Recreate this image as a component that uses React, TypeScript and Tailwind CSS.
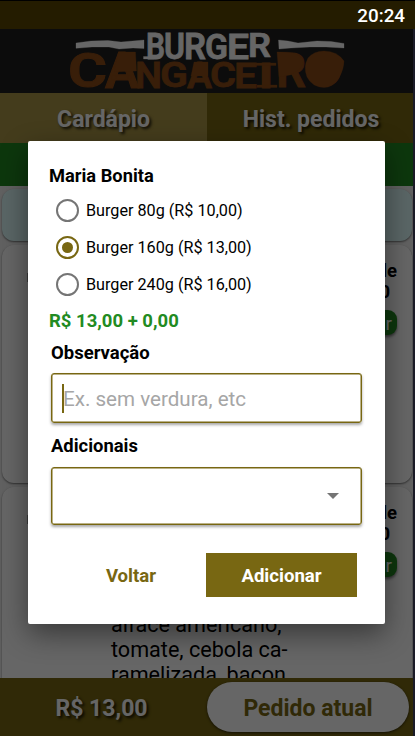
import { useState } from "react";

interface Option {
  id: number;
  label: string;
}

interface LogoLetter {
  char: string;
  x: number;
  width: number;
  base: number;
  height: number;
}

const options: Option[] = [
  { id: 1, label: "Burger 80g (R$ 10,00)" },
  { id: 2, label: "Burger 160g (R$ 13,00)" },
  { id: 3, label: "Burger 240g (R$ 16,00)" },
];

const burger: LogoLetter[] = [
  { char: "B", x: 146, width: 19, base: 59, height: 26 },
  { char: "U", x: 164, width: 21, base: 59, height: 26 },
  { char: "R", x: 184, width: 22, base: 59, height: 26 },
  { char: "G", x: 205, width: 23, base: 58.5, height: 25 },
  { char: "E", x: 227, width: 22, base: 58.5, height: 25 },
  { char: "R", x: 248, width: 23, base: 57, height: 24 },
];

const cangaceiro: LogoLetter[] = [
  { char: "C", x: 68, width: 39, base: 87, height: 34 },
  { char: "A", x: 105, width: 34, base: 87.5, height: 35 },
  { char: "N", x: 135, width: 27, base: 87.5, height: 26 },
  { char: "G", x: 160, width: 28, base: 87, height: 25 },
  { char: "A", x: 187, width: 25, base: 87.5, height: 26 },
  { char: "C", x: 210, width: 26, base: 87, height: 25 },
  { char: "E", x: 234, width: 23, base: 87.5, height: 25 },
  { char: "I", x: 258, width: 16, base: 87.5, height: 25 },
  { char: "R", x: 276, width: 30, base: 87, height: 34 },
  { char: "O", x: 307, width: 35, base: 86, height: 32 },
];

function LogoWord({ letters }: { letters: LogoLetter[] }) {
  return (
    <>
      {letters.map((l, index) => (
        <text
          key={index}
          transform={`translate(${l.x} ${l.base}) scale(1 ${l.height / 10})`}
          fontSize="14.06"
          textLength={l.width}
          lengthAdjust="spacingAndGlyphs"
        >
          {l.char}
        </text>
      ))}
    </>
  );
}

function Logo() {
  return (
    <svg
      width="280"
      height="64"
      viewBox="66 29 280 64"
      className="overflow-visible font-['Roboto',sans-serif] font-semibold"
    >
      <g fill="#ffffff" stroke="#ffffff" strokeWidth="0.3">
        <path d="M76 43 L91 41 L108 40.5 L121 42 L144 40 V48.5 L133 48 L119 49 L109 47 L92 47 L76 48.3Z" />
        <path d="M278.5 40 L288 41 L298 43 L317 41 L331 41.5 L344 43.5 V48 L326 47 L310 47 L291 48 L279 49Z" />
        <path d="M143.500 56.500 H154 V59 H143.500Z" />
        <LogoWord letters={burger} />
      </g>
      <g fill="#8d4b17" stroke="#8d4b17" strokeWidth="0.3">
        <LogoWord letters={cangaceiro} />
        {/* solid heads of the wood-cut lettering */}
        <path d="M118.500 52 H135.500 L136.500 71 L114 72Z" />
        <path d="M194 62 H208 V76 H191Z" />
        <path d="M256 63 H276 V65.500 H256Z" />
        <path d="M257 85 H277 V87.500 H257Z" />
        <path d="M277 52 Q302 51 303 62 Q302 70 290 75 L279 77Z" />
        <path d="M324 51 Q337 51 344 61 Q344 69 339 78 Q333 87.500 324 87.500 Q312 87 307 77 Q303 67 308 58 Q314 51 324 51Z" />
      </g>
    </svg>
  );
}

function MenuCard({ height, children }: { height: string; children?: string }) {
  return (
    <div
      className={`${height} shrink-0 overflow-hidden rounded-xl bg-white shadow-[0_1px_2px_rgba(0,0,0,0.5)]`}
    >
      <div className="flex h-[143px] justify-between pl-[25px] pr-[15px] pt-[15px]">
        <div className="mt-[13px] h-[9px] w-1 bg-[#999]"></div>
        <div className="w-[92px] text-center">
          <p className="ml-[-6px] w-[98px] whitespace-nowrap text-right text-[18.500px] font-bold leading-[22px]">
            A partir de
          </p>
          <p className="pr-[7px] text-right text-[18.500px] font-bold leading-[21px]">
            R$ 10,00
          </p>
          <p className="mt-[7px] h-[25px] rounded-[9px] bg-[#228b22] pr-[5px] text-right text-[19px] leading-[27px] text-white shadow-[0_2px_3px_rgba(0,0,0,0.5)]">
            Adicionar
          </p>
        </div>
      </div>
      {children && (
        <p className="ml-[109px] mt-[-18px] whitespace-pre-line text-[21.600px] leading-[25px]">
          {children}
        </p>
      )}
    </div>
  );
}

function App() {
  const [selected, setSelected] = useState<number>(2);
  const [note, setNote] = useState<string>("");

  return (
    <div className="flex h-[736px] w-[415px] flex-col overflow-hidden border-t border-black bg-[#241c00] font-['Roboto',sans-serif] text-black">
      <div className="flex h-7 shrink-0 items-center justify-end pr-[10px] pt-[2px] text-[18.800px] font-medium text-white">
        20:24
      </div>

      <div className="relative flex h-[707px] flex-col bg-[#f2f2f2]">
        <div className="flex h-16 shrink-0 justify-center bg-[#1e1e1e] pr-[3px]">
          <Logo />
        </div>
        <div className="flex h-[50px] shrink-0 text-center text-[23px] font-bold leading-[53px] text-white [text-shadow:2px_2px_3px_rgba(0,0,0,0.8)]">
          <div className="w-[207px] bg-[#aa9646]">Cardápio</div>
          <div className="flex-1 bg-[#786712]">Hist. pedidos</div>
        </div>
        <div className="h-[43px] shrink-0 bg-[#228b22]"></div>

        <div className="flex min-h-0 flex-1 flex-col gap-1 overflow-hidden py-[3px] pl-[2px] pr-[3px]">
          <div className="h-[52px] shrink-0 rounded-xl bg-[#e0ffff] shadow-[0_1px_2px_rgba(0,0,0,0.5)]"></div>
          <MenuCard height="h-[238px]" />
          <MenuCard height="h-[260px]">
            {"alface americano,\ntomate, cebola ca-\nramelizada, bacon"}
          </MenuCard>
        </div>

        <div className="flex h-[58px] shrink-0 items-center bg-[#786712] text-center text-[23px] font-bold">
          <div className="w-[203px] pt-[4px] text-white [text-shadow:2px_2px_3px_rgba(0,0,0,0.8)]">
            R$ 13,00
          </div>
          <div className="ml-1 h-[50px] w-[202px] rounded-[25px] bg-white leading-[54px] text-[#786712] shadow-[0_1px_3px_rgba(0,0,0,0.6)]">
            Pedido atual
          </div>
        </div>

        {/* modal */}
        <div className="absolute inset-0 border-r-2 border-[#1b1b27] bg-black/60">
          <div className="ml-7 mt-[112px] flex h-[483px] w-[357px] flex-col rounded-[2px] bg-white pl-[21px] pr-[23px] shadow-[0_10px_28px_rgba(0,0,0,0.45)]">
            <p className="mt-[23px] text-[18.300px] font-bold leading-6">
              Maria Bonita
            </p>
            <div className="mt-[4px] flex flex-col">
              {options.map((option) => (
                <button
                  key={option.id}
                  className="flex h-[37px] items-center pl-[7px]"
                  onClick={() => setSelected(option.id)}
                >
                  <span
                    className={`flex size-[23px] items-center justify-center rounded-full border-2 ${
                      selected === option.id
                        ? "border-[#786712]"
                        : "border-[#757575]"
                    }`}
                  >
                    {selected === option.id && (
                      <span className="size-[11px] rounded-full bg-[#786712]"></span>
                    )}
                  </span>
                  <span className="ml-[7px] pt-[2px] text-[16.200px]">
                    {option.label}
                  </span>
                </button>
              ))}
            </div>
            <p className="mt-[6px] text-[18.500px] font-bold leading-6 text-[#228b22]">
              R$ 13,00 + 0,00
            </p>
            <p className="ml-[2px] mt-[8px] text-[18.500px] font-bold leading-6">
              Observação
            </p>
            <div className="ml-[2px] mt-[8px] flex h-[50px] w-[311px] items-center rounded-[3px] border border-[#786712] pl-[10px] shadow-[inset_0_0_0_0.5px_#786712,0_2px_3px_rgba(0,0,0,0.35)]">
              <span className="h-[29px] w-[2px] shrink-0 bg-[#786712]"></span>
              <input
                className="ml-[-1px] w-[280px] pt-[2px] text-[20.600px] outline-none placeholder:text-[#a6a6a6]"
                placeholder="Ex. sem verdura, etc"
                value={note}
                onChange={(e) => setNote(e.target.value)}
              />
            </div>
            <p className="ml-[2px] mt-[11px] text-[18.400px] font-bold leading-6">
              Adicionais
            </p>
            <div className="ml-[2px] mt-[9px] flex h-[58px] w-[311px] items-center justify-end rounded-[3px] border border-[#786712] pr-[22px] shadow-[inset_0_0_0_0.5px_#786712,0_2px_3px_rgba(0,0,0,0.35)]">
              <svg width="12" height="6" viewBox="0 0 12 6">
                <path d="M0 0H12L6 6Z" fill="#757575" />
              </svg>
            </div>
            <div className="mt-[28px] flex h-[44px] text-center text-[18.600px] font-bold leading-[46px]">
              <button className="ml-[7px] w-[150px] text-[#786712]">
                Voltar
              </button>
              <button className="w-[151px] bg-[#786712] text-white">
                Adicionar
              </button>
            </div>
          </div>
        </div>
      </div>
    </div>
  );
}

export default App;
